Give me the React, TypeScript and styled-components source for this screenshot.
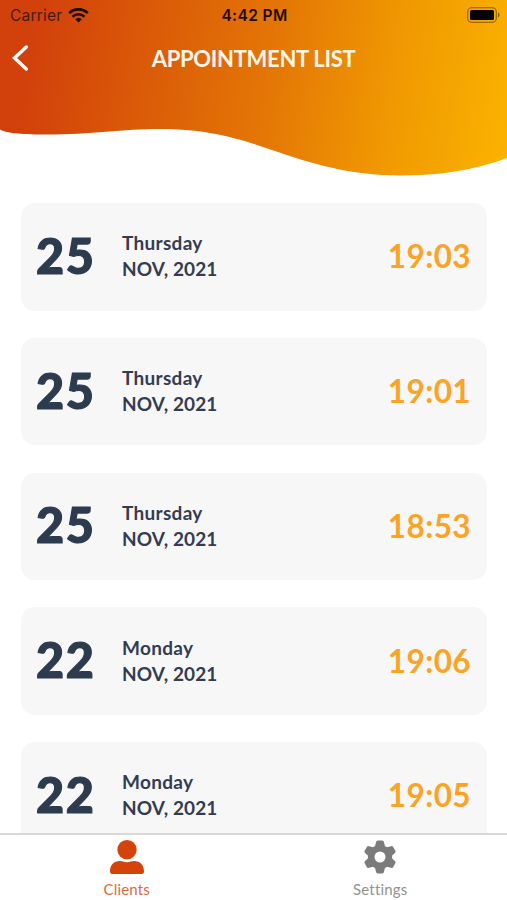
import React from "react";
import styled, { createGlobalStyle } from "styled-components";

const GlobalStyle = createGlobalStyle`
  *, *::before, *::after { box-sizing: border-box; }
  body { margin: 0; background: #fff; font-family: Lato, "Noto Sans", sans-serif; }
`;

const Screen = styled.div`
  display: flex;
  flex-direction: column;
  width: 507px;
  height: 900px;
  overflow: hidden;
  background: #fff;
`;

const Header = styled.header`
  position: relative;
  flex: 0 0 203px;
`;

const Wave = styled.svg`
  position: absolute;
  inset: 0 auto auto 0;
  display: block;
`;

const StatusBar = styled.div`
  position: relative;
  display: grid;
  grid-template-columns: 1fr auto 1fr;
  align-items: center;
  height: 29px;
  padding: 0 7px 0 10px;
  font-family: Inter, sans-serif;
  font-size: 15.5px;
  color: #1d0d04;
`;

const Carrier = styled.div`
  display: flex;
  align-items: center;
  gap: 6px;
  padding-top: 1px;
  color: #4a1a07;
  letter-spacing: 0.2px;
`;

const Clock = styled.div`
  padding: 1px 1px 0 0;
  font-weight: 600;
  font-size: 15.5px;
  letter-spacing: 0.4px;
`;

const Battery = styled.svg`
  display: block;
  justify-self: end;
`;

const NavBar = styled.div`
  position: relative;
  display: grid;
  grid-template-columns: 60px 1fr 60px;
  align-items: center;
  height: 58px;
`;

const BackButton = styled.button`
  display: flex;
  padding: 0 0 0 11px;
  border: 0;
  background: none;
`;

const Title = styled.h1`
  margin: 0;
  padding-top: 1px;
  text-align: center;
  color: #fff6ea;
  font-size: 22px;
  line-height: 28px;
  font-weight: 700;
  letter-spacing: -0.3px;
  white-space: nowrap;
`;

const List = styled.main`
  display: flex;
  flex: 1 1 0;
  min-height: 0;
  flex-direction: column;
  gap: 27.3px;
  padding: 0 20px 0 21px;
  overflow: hidden;
`;

const Card = styled.article`
  display: grid;
  grid-template-columns: 86px 1fr auto;
  flex: 0 0 107.5px;
  align-items: center;
  padding: 0 17px 1px 15px;
  border-radius: 14px;
  background: #f7f7f7;
`;

const Day = styled.div`
  padding-bottom: 3px;
  color: #2d3b4e;
  font-size: 48.5px;
  line-height: 56px;
  font-weight: 900;
  letter-spacing: 1.6px;
  -webkit-text-stroke: 1.2px #2d3b4e;
`;

const DateText = styled.div`
  color: #333c52;
  font-size: 19px;
  line-height: 26px;
  font-weight: 700;
  white-space: nowrap;
`;

const Weekday = styled.div`
  letter-spacing: 0.3px;
`;

const Month = styled.div`
  letter-spacing: 0.1px;
`;

const Time = styled.time`
  margin-right: -1px;
  color: #fba324;
  font-size: 31.5px;
  line-height: 40px;
  font-weight: 700;
  letter-spacing: 0.4px;
`;

const TabBar = styled.nav`
  display: grid;
  grid-template-columns: 1fr 1fr;
  flex: 0 0 67px;
  border-top: 2px solid #d9d9d9;
  background: #fff;
`;

const Tab = styled.button<{ $active?: boolean }>`
  display: flex;
  flex-direction: column;
  align-items: center;
  gap: 5px;
  padding: 2px 0 0;
  border: 0;
  background: none;
  font-family: inherit;
  font-size: 15px;
  line-height: 18px;
  letter-spacing: 0.2px;
  color: ${(p) => (p.$active ? "#df6a42" : "#929292")};

  svg {
    display: block;
    color: ${(p) => (p.$active ? "#d3430b" : "#7b7b7b")};
  }
`;

const appointments = [
  { day: "25", weekday: "Thursday", month: "NOV, 2021", time: "19:03" },
  { day: "25", weekday: "Thursday", month: "NOV, 2021", time: "19:01" },
  { day: "25", weekday: "Thursday", month: "NOV, 2021", time: "18:53" },
  { day: "22", weekday: "Monday", month: "NOV, 2021", time: "19:06" },
  { day: "22", weekday: "Monday", month: "NOV, 2021", time: "19:05" },
];

const WifiIcon = () => (
  <svg width="21" height="15" viewBox="0 0 21 15" fill="none" stroke="#1d0d04">
    <path d="M1.2 5.1a13.4 13.4 0 0 1 18.6 0" strokeWidth="2.7" />
    <path d="M4.5 8.7a8.6 8.6 0 0 1 12 0" strokeWidth="2.6" />
    <path d="M10.5 14.6 7.2 11.3a4.8 4.8 0 0 1 6.6 0Z" fill="#1d0d04" stroke="none" />
  </svg>
);

const PersonIcon = () => (
  <svg width="36" height="38" viewBox="0 0 36 38" fill="currentColor">
    <circle cx="18" cy="12.7" r="9.7" />
    <path d="M1 34.5C1 28 5 24 11 24C13.500 24 14.500 25.200 18 25.200S22.500 24 25 24C31 24 35 28 35 34.500Q35 37 32.500 37H3.500Q1 37 1 34.500Z" />
  </svg>
);

const GearIcon = () => (
  <svg width="38" height="38" viewBox="0 0 38 38" fill="none" stroke="currentColor">
    <circle cx="19" cy="20" r="8.8" strokeWidth="6.6" />
    <g fill="currentColor" stroke="none">
      {[0, 60, 120, 180, 240, 300].map((angle) => (
        <path
          key={angle}
          transform={`rotate(${angle} 19 20)`}
          d="M13.600 11 15 5.200Q15.300 3.600 16.700 3.600H21.300Q22.700 3.600 23 5.200L24.400 11Z"
        />
      ))}
    </g>
  </svg>
);

export default function App() {
  return (
    <>
      <GlobalStyle />
      <Screen>
        <Header>
          <Wave width="507" height="180" viewBox="0 0 507 180">
            <defs>
              <linearGradient id="sunset" gradientUnits="userSpaceOnUse" x1="35" y1="40" x2="510" y2="120">
                <stop offset="0" stopColor="#d2410b" />
                <stop offset="0.5" stopColor="#e47705" />
                <stop offset="0.75" stopColor="#f09802" />
                <stop offset="1" stopColor="#fab200" />
              </linearGradient>
            </defs>
            <path
              d="M0 0H507V158C475 170 440 175.5 400 175.5C350 175.5 310 163 275 151C240 139 210 129 160 129C120 129 90 135 40 134.500C15 134 7 133 0 129.500Z"
              fill="url(#sunset)"
            />
          </Wave>
          <StatusBar>
            <Carrier>
              Carrier
              <WifiIcon />
            </Carrier>
            <Clock>4:42 PM</Clock>
            <Battery width="33" height="16" viewBox="0 0 33 16">
              <rect x="0.7" y="0.7" width="28.6" height="14.6" rx="4" fill="none" stroke="#8a5a08" strokeWidth="1.1" />
              <rect x="3" y="3" width="24" height="10" rx="1.5" fill="#050200" />
              <path d="M31 5.500c2 .8 2 4.200 0 5Z" fill="#8a5a08" />
            </Battery>
          </StatusBar>
          <NavBar>
            <BackButton aria-label="Back">
              <svg width="18" height="28" viewBox="0 0 18 28" fill="none" stroke="#fff" strokeWidth="3.4" strokeLinecap="round">
                <path d="M15.300 3 3.500 14l11.800 11" />
              </svg>
            </BackButton>
            <Title>APPOINTMENT LIST</Title>
          </NavBar>
        </Header>
        <List>
          {appointments.map((a) => (
            <Card key={a.time}>
              <Day>{a.day}</Day>
              <DateText>
                <Weekday>{a.weekday}</Weekday>
                <Month>{a.month}</Month>
              </DateText>
              <Time>{a.time}</Time>
            </Card>
          ))}
        </List>
        <TabBar>
          <Tab $active>
            <PersonIcon />
            Clients
          </Tab>
          <Tab>
            <GearIcon />
            Settings
          </Tab>
        </TabBar>
      </Screen>
    </>
  );
}
